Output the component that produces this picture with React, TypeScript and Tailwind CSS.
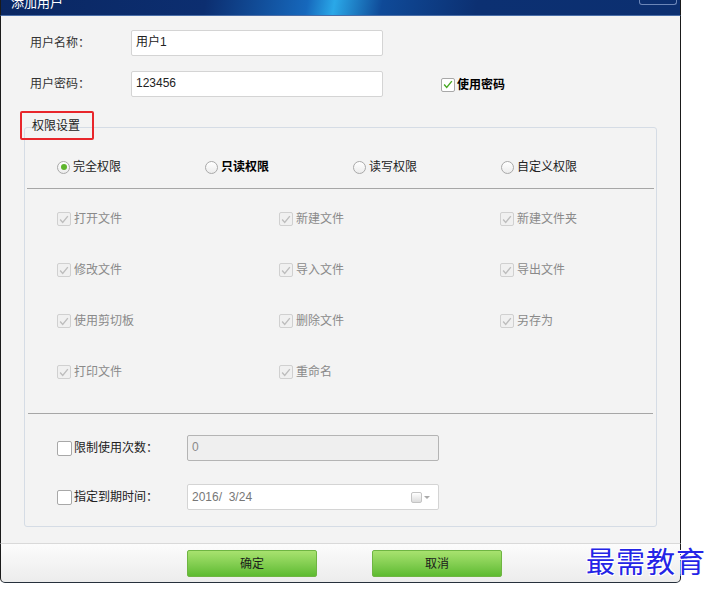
import type { ReactNode } from 'react'

// 添加用户 对话框

function Check({ color }: { color: string }) {
  return (
    <svg viewBox="0 0 14 14" className="h-[13px] w-[13px]">
      <polyline points="2.5,7 5.5,10.5 11.5,3" fill="none" stroke={color} strokeWidth="1.6" />
    </svg>
  )
}

function Radio({ checked = false, bold = false, label }: { checked?: boolean; bold?: boolean; label: string }) {
  return (
    <div className="flex items-center gap-[3px]">
      <span className="flex h-[13px] w-[13px] items-center justify-center rounded-full border border-[#a9a9a9] bg-gradient-to-b from-white to-[#ececec]">
        {checked && <span className="h-[6px] w-[6px] rounded-full bg-[#5db52c]" />}
      </span>
      <span className={`text-[12px] ${bold ? 'font-bold text-black' : 'text-[#222]'}`}>{label}</span>
    </div>
  )
}

function DisabledCheck({ label }: { label: string }) {
  return (
    <div className="flex h-[16px] items-center gap-[3px]">
      <span className="flex h-[14px] w-[14px] items-center justify-center rounded-[2px] border border-[#d0d0d0] bg-[#f0f0f0]">
        <Check color="#bdbdbd" />
      </span>
      <span className="text-[12px] text-[#8a8a8a]">{label}</span>
    </div>
  )
}

function Field({ children, disabled = false, className = '' }: { children?: ReactNode; disabled?: boolean; className?: string }) {
  return (
    <div
      className={`flex h-[26px] rounded-[2px] border px-[4px] text-[12px] leading-[14px] ${
        disabled ? 'border-[#b4b4b4] bg-[#efefef] text-[#8a8a8a]' : 'border-[#d4d4d4] bg-white text-[#222]'
      } ${className}`}
    >
      {children}
    </div>
  )
}

const perms = [
  ['打开文件', '新建文件', '新建文件夹'],
  ['修改文件', '导入文件', '导出文件'],
  ['使用剪切板', '删除文件', '另存为'],
  ['打印文件', '重命名', ''],
]

export default function App() {
  return (
    <div className="relative h-[595px] w-[709px] overflow-hidden bg-white font-['Liberation_Sans','Noto_Sans_CJK_SC',sans-serif]">
      <div className="flex w-[681px] flex-col">
        {/* 标题栏 */}
        <div className="flex h-[16px] items-start justify-between border-x border-b border-x-[#1a1a1a] border-b-[#4a6ea8] bg-[linear-gradient(100deg,#0a2762_0%,#0c2e70_30%,#1668bc_45%,#2aa8e8_49%,#0f4a98_56%,#0c3072_70%,#0c2f70_100%)]">
          <span className="-mt-[5px] ml-[10px] text-[13px] leading-[16px] text-white">添加用户</span>
          <span className="mr-[3px] h-[5px] w-[38px] rounded-b-[3px] border border-t-0 border-[#6c86b8]" />
        </div>

        {/* 主体 */}
        <div className="flex flex-col border-x border-[#1a1a1a] bg-[#f3f3f3] pb-[16px]">
          <div className="mt-[14px] flex items-center pl-[29px]">
            <span className="w-[101px] text-[12px] text-[#333]">用户名称：</span>
            <Field className="w-[252px] items-start pt-[4px]">用户1</Field>
          </div>
          <div className="mt-[15px] flex items-center pl-[29px]">
            <span className="w-[101px] text-[12px] text-[#333]">用户密码：</span>
            <Field className="w-[252px] items-start pt-[4px]">123456</Field>
            <div className="ml-[58px] mt-[1px] flex items-center gap-[2px]">
              <span className="flex h-[14px] w-[14px] items-center justify-center rounded-[2px] border border-[#a8a8a8] bg-white">
                <Check color="#47a823" />
              </span>
              <span className="text-[12px] font-bold text-black">使用密码</span>
            </div>
          </div>

          {/* 权限设置 */}
          <div className="mt-[14px] flex flex-col pl-[19px]">
            <div className="relative z-10 flex h-[29px] w-[74px] items-center rounded-[2px] border-2 border-[#e8262b] pl-[10px] text-[12px] text-[#222]">
              权限设置
            </div>
            <div className="-mt-[13px] ml-[4px] flex h-[400px] w-[633px] flex-col rounded-[3px] border border-[#d5dce5] bg-[#f3f3f3]">
              <div className="mt-[30px] grid h-[16px] grid-cols-[148px_148px_148px_148px] items-center pl-[32px]">
                <Radio checked label="完全权限" />
                <Radio bold label="只读权限" />
                <Radio label="读写权限" />
                <Radio label="自定义权限" />
              </div>
              <div className="mx-[2px] mt-[14px] h-px bg-[#a6a6a6]" />

              <div className="mt-[22px] flex flex-col gap-[35px] pl-[32px]">
                {perms.map((row, i) => (
                  <div key={i} className="grid grid-cols-[222px_221px_160px]">
                    {row.map((p, j) => (p ? <DisabledCheck key={j} label={p} /> : <span key={j} />))}
                  </div>
                ))}
              </div>
              <div className="mx-[3px] mt-[33px] h-px bg-[#a6a6a6]" />

              <div className="mt-[21px] flex items-center pl-[32px]">
                <span className="h-[15px] w-[15px] rounded-[2px] border border-[#a8a8a8] bg-white" />
                <span className="ml-[2px] w-[113px] text-[12px] text-[#222]">限制使用次数：</span>
                <Field disabled className="w-[252px] items-start pt-[4px]">0</Field>
              </div>
              <div className="mt-[23px] flex items-center pl-[32px]">
                <span className="h-[15px] w-[15px] rounded-[2px] border border-[#a8a8a8] bg-white" />
                <span className="ml-[2px] w-[113px] text-[12px] text-[#222]">指定到期时间：</span>
                <Field className="w-[252px] items-center justify-between">
                  <span className="text-[#777]">2016/&nbsp;&nbsp;3/24</span>
                  <span className="mr-[4px] flex items-center gap-[2px]">
                    <span className="h-[11px] w-[11px] rounded-[2px] border border-[#c4c4c4] bg-gradient-to-b from-white to-[#dcdcdc]" />
                    <span className="h-0 w-0 border-x-[3px] border-t-[3px] border-x-transparent border-t-[#aaa]" />
                  </span>
                </Field>
              </div>
            </div>
          </div>
        </div>

        {/* 按钮栏 */}
        <div className="flex h-[40px] justify-center gap-[55px] rounded-b-[5px] border-x border-b border-t border-x-[#1a1a1a] border-b-[#26303c] border-t-[#d9d9d9] bg-gradient-to-b from-[#fcfcfc] to-[#ececec] pl-[8px] pt-[6px]">
          {['确定', '取消'].map((t) => (
            <button
              key={t}
              className="flex h-[27px] w-[130px] items-center justify-center rounded-[2px] border border-[#6fb542] bg-gradient-to-b from-[#a8e26f] to-[#5dbb30] text-[12px] text-[#1a1a1a]"
            >
              {t}
            </button>
          ))}
        </div>
      </div>

      {/* 水印 */}
      <div className="absolute left-[586px] top-[545px] text-[29px] leading-[36px] tracking-[1px] text-[#2424e6] [text-shadow:0_0_2px_#fff,1px_1px_0_#fff,-1px_-1px_0_#fff,1px_-1px_0_#fff,-1px_1px_0_#fff]">
        最需教育
      </div>
    </div>
  )
}
